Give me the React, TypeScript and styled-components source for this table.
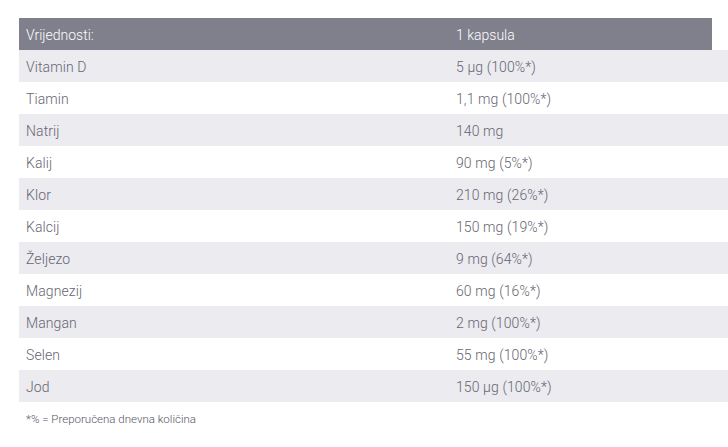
import React from 'react';
import styled, { createGlobalStyle } from 'styled-components';

const GlobalStyle = createGlobalStyle`
  body {
    margin: 0;
    background: #ffffff;
    font-family: Roboto, "Liberation Sans", Arial, sans-serif;
  }
`;

const Wrapper = styled.div`
  padding: 18px 0 0 19px;
`;

const Table = styled.div`
  display: flex;
  flex-direction: column;
`;

const HeaderRow = styled.div`
  display: grid;
  grid-template-columns: 430px 1fr;
  width: 693px;
  height: 32px;
  align-items: center;
  background: #7f808c;
  color: #ffffff;
  font-size: 14px;
  font-weight: 300;
`;

const Row = styled.div<{ $shaded: boolean }>`
  display: grid;
  grid-template-columns: 430px 1fr;
  height: 32px;
  align-items: center;
  background: ${(p) => (p.$shaded ? '#ebebf0' : '#ffffff')};
  color: #666670;
  font-size: 14px;
  font-weight: 300;
  letter-spacing: 0.1px;
`;

const Cell = styled.div`
  padding: 2px 0 0 7px;
  white-space: nowrap;
`;

const Note = styled.p`
  margin: 10px 0 0 7px;
  font-size: 11.5px;
  font-weight: 300;
  color: #55555f;
`;

const rows: [string, string][] = [
  ['Vitamin D', '5 µg (100%*)'],
  ['Tiamin', '1,1 mg (100%*)'],
  ['Natrij', '140 mg'],
  ['Kalij', '90 mg (5%*)'],
  ['Klor', '210 mg (26%*)'],
  ['Kalcij', '150 mg (19%*)'],
  ['Željezo', '9 mg (64%*)'],
  ['Magnezij', '60 mg (16%*)'],
  ['Mangan', '2 mg (100%*)'],
  ['Selen', '55 mg (100%*)'],
  ['Jod', '150 µg (100%*)'],
];

const App: React.FC = () => {
  return (
    <>
      <GlobalStyle />
      <Wrapper>
        <Table>
          <HeaderRow>
            <Cell>Vrijednosti:</Cell>
            <Cell>1 kapsula</Cell>
          </HeaderRow>
          {rows.map(([name, value], i) => (
            <Row key={name} $shaded={i % 2 === 0}>
              <Cell>{name}</Cell>
              <Cell>{value}</Cell>
            </Row>
          ))}
        </Table>
        <Note>*% = Preporučena dnevna količina</Note>
      </Wrapper>
    </>
  );
};

export default App;
